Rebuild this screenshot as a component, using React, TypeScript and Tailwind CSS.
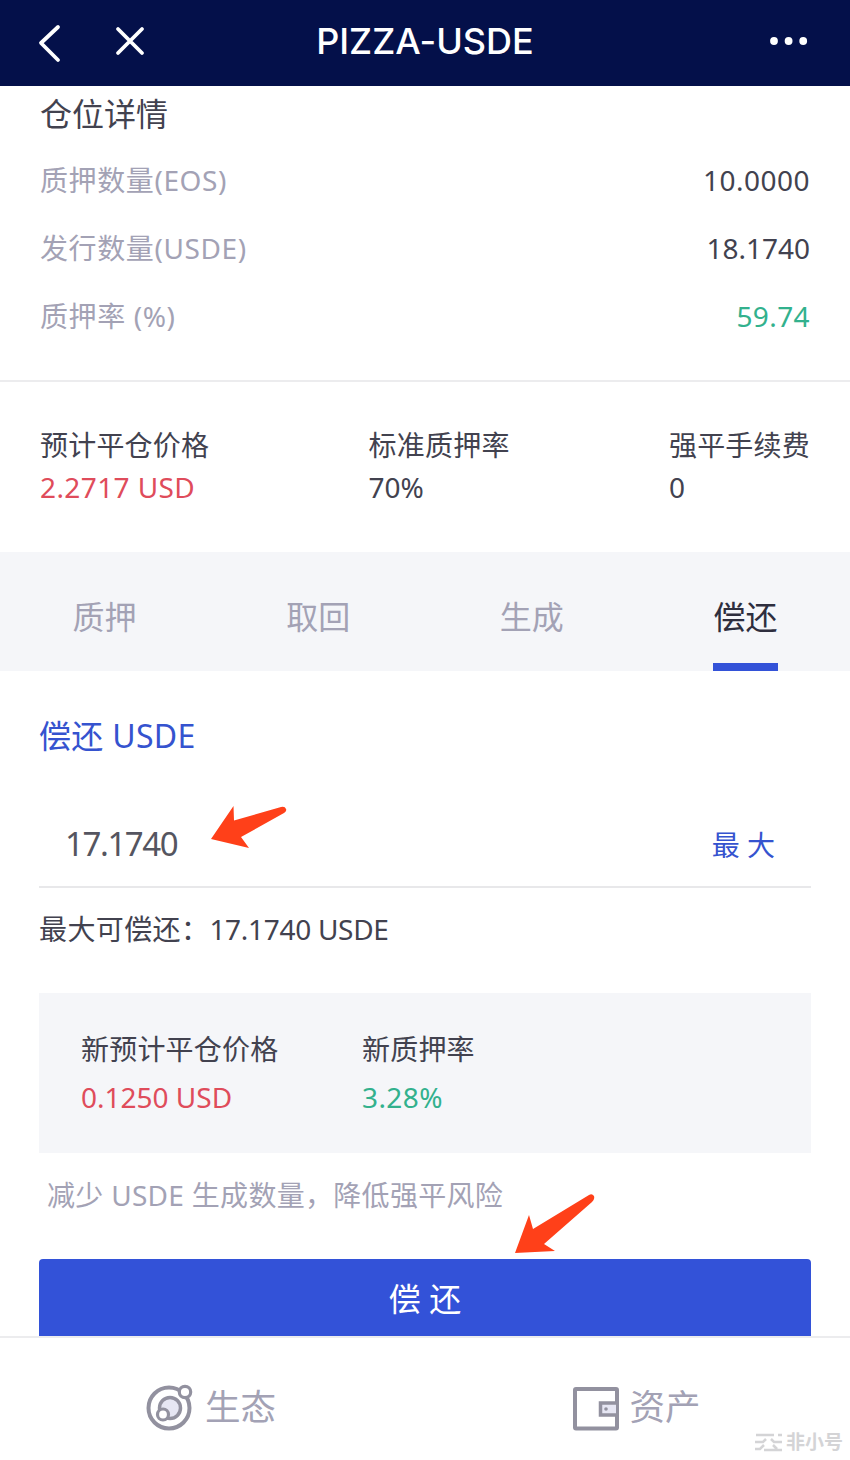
import type { ReactNode } from "react";
import clsx from "clsx";

const positionRows = [
  { label: "质押数量(EOS)", value: "10.0000", className: "tracking-[0.5px]" },
  { label: "发行数量(USDE)", value: "18.1740", className: "tracking-normal" },
  { label: "质押率 (%)", value: "59.74", className: "tracking-[0.4px] text-[#32b18d]" },
];

const tabs = ["质押", "取回", "生成", "偿还"];

const Header = () => (
  <header className="flex h-[86px] shrink-0 items-center bg-[#04104a] pb-[4px] pl-[37px] pr-[41px] text-white">
    <svg className="mt-[3px] h-[40px] w-[26px]" viewBox="0 0 26 40" fill="none" stroke="currentColor" strokeWidth="3.8" strokeLinecap="round" strokeLinejoin="round">
      <path d="M21 4 4 20 21 37" />
    </svg>
    <svg className="ml-[51px] h-[32px] w-[32px]" viewBox="0 0 32 32" fill="none" stroke="currentColor" strokeWidth="3.8" strokeLinecap="round">
      <path d="M4 4 28 28M28 4 4 28" />
    </svg>
    <h1 className="flex-1 pr-[65px] text-center font-['Inter','Noto_Sans',sans-serif] text-[36px] font-medium leading-[44px] [font-feature-settings:'calt'_0]">
      PIZZA-USDE
    </h1>
    <svg className="h-[10px] w-[40px]" viewBox="0 0 40 10" fill="currentColor">
      <circle cx="5" cy="5" r="3.9" />
      <circle cx="19.6" cy="5" r="3.9" />
      <circle cx="34.2" cy="5" r="3.9" />
    </svg>
  </header>
);

const PositionDetails = () => (
  <section className="h-[296px] border-b-2 border-[#ececee] px-[40px] pt-[8px]">
    <h2 className="text-[32px] leading-[40px]">仓位详情</h2>
    <div className="pt-[12px]">
      {positionRows.map((row) => (
        <div key={row.label} className="flex h-[68px] items-center justify-between">
          <span className="tracking-[0.6px] text-[#a3a2b5]">{row.label}</span>
          <span className={row.className}>{row.value}</span>
        </div>
      ))}
    </div>
  </section>
);

type StatProps = {
  label: string;
  className?: string;
  children: ReactNode;
};

const Stat = ({ label, className, children }: StatProps) => (
  <div>
    <div className="leading-[44px] tracking-[0.2px]">{label}</div>
    <div className={clsx("leading-[41px]", className)}>{children}</div>
  </div>
);

const Tabs = () => (
  <nav className="flex h-[119px] justify-between bg-[#f5f6f9] px-[72px] text-[32px]">
    {tabs.map((tab) => (
      <button
        key={tab}
        className={clsx(
          "w-[65px] border-b-8 pt-[18px]",
          tab === "偿还" ? "border-[#3352d8] text-[#2e2e3e]" : "border-transparent text-[#a3a2b5]"
        )}
      >
        {tab}
      </button>
    ))}
  </nav>
);

const RepayForm = () => (
  <main className="relative h-[665px] px-[39px] pt-[45px]">
    <h2 className="text-[32px] leading-[40px] tracking-[0.3px] text-[#3553cf]">偿还 USDE</h2>
    <div className="mt-[45px] flex h-[87px] items-center justify-between border-b-2 border-[#e8e8ea] pl-[26px] pr-[36px]">
      <span className="text-[33px] tracking-[-1.4px] text-[#555560]">17.1740</span>
      <button className="pt-[2px] text-[#3553cf]">最 大</button>
    </div>
    <p className="mt-[21px] leading-[40px]">
      <span className="tracking-[0.4px]">最大可偿还：</span>
      <span className="tracking-[-0.3px]">17.1740 USDE</span>
    </p>
    <div className="mt-[44px] flex h-[160px] bg-[#f5f6f9] pl-[42px] pt-[33px]">
      <div className="w-[281px]">
        <div className="leading-[46px] tracking-[0.2px]">新预计平仓价格</div>
        <div className="leading-[50px] text-[#df4c5b]">0.1250 USD</div>
      </div>
      <div>
        <div className="leading-[46px] tracking-[0.2px]">新质押率</div>
        <div className="leading-[50px] tracking-[0.4px] text-[#32b18d]">3.28%</div>
      </div>
    </div>
    <p className="mt-[22px] pl-[8px] leading-[40px] tracking-[0.3px] text-[#a3a2b5]">减少 USDE 生成数量，降低强平风险</p>
    <button className="mt-[44px] h-[77px] w-full rounded-t-[4px] bg-[#3352d8] pt-[2px] text-[32px] text-white">偿 还</button>

    <svg className="absolute left-[208px] top-[132px] h-[48px] w-[82px]" viewBox="0 0 82 48" fill="#ff4019">
      <path d="M3 36 25.500 3 26 17.500 73 4Q77 3 78 6 79 8 76 10L33 34 41 45Z" />
    </svg>
    <svg className="absolute left-[512px] top-[520px] h-[66px] w-[86px]" viewBox="0 0 86 66" fill="#ff4019">
      <path d="M3 62 17 24 21 38 77 4Q80 2 82 5 83 8 80 11L32 53 43 60Z" />
    </svg>
  </main>
);

const EcosystemIcon = () => (
  <svg className="h-[48px] w-[48px]" viewBox="0 0 48 48" fill="none" stroke="#92919f" strokeWidth="4">
    <circle cx="23" cy="25" r="20.500" />
    <circle cx="24" cy="25" r="10.500" fill="#e6e6f3" strokeWidth="3.500" />
    <circle cx="17" cy="31.500" r="5.500" fill="#fff" strokeWidth="3.200" />
    <circle cx="39" cy="9" r="5.700" fill="#fff" strokeWidth="3.200" />
  </svg>
);

const WalletIcon = () => (
  <svg className="mt-[3px] h-[46px] w-[48px]" viewBox="0 0 48 46" fill="none" stroke="#92919f" strokeWidth="4">
    <rect x="3" y="3" width="42" height="39.500" rx="1" />
    <path d="M44 17H28.500V29H44" fill="#e6e6f3" strokeWidth="3.500" />
    <circle cx="34" cy="23" r="1.800" fill="#92919f" stroke="none" />
  </svg>
);

const BottomNav = () => (
  <footer className="relative flex h-[124px] border-t-2 border-[#ececee] bg-white pb-[20px] pt-[36px] text-[35.5px] text-[#a3a2b5]">
    <div className="flex flex-1 items-center pl-[146px]">
      <EcosystemIcon />
      <span className="ml-[11px] pb-[2px] leading-[48px]">生态</span>
    </div>
    <div className="flex flex-1 items-center pl-[147px]">
      <WalletIcon />
      <span className="ml-[10px] pb-[2px] leading-[48px]">资产</span>
    </div>
    <div className="absolute bottom-[5px] right-[7px] flex items-center gap-[3px] text-[19px] font-bold leading-[26px] text-[#d4d4d6]">
      <svg className="h-[20px] w-[29px]" viewBox="0 0 29 20" fill="none" stroke="currentColor" strokeWidth="2.500">
        <path d="M2 3H20M24 3H28M1 10H9L12 7M17 7 20 10H28M1 17H6L10 13M10 18H28M19 13 23 17" />
      </svg>
      非小号
    </div>
  </footer>
);

export default function App() {
  return (
    <div className="flex h-[1460px] w-[850px] flex-col overflow-hidden bg-white font-['Noto_Sans','Noto_Sans_CJK_SC',sans-serif] text-[28px] text-[#42424f]">
      <Header />
      <PositionDetails />
      <section className="flex h-[170px] justify-between px-[40px] pt-[41px]">
        <Stat label="预计平仓价格" className="tracking-[0.4px] text-[#df4c5b]">2.2717 USD</Stat>
        <Stat label="标准质押率">70%</Stat>
        <Stat label="强平手续费">0</Stat>
      </section>
      <Tabs />
      <RepayForm />
      <BottomNav />
    </div>
  );
}
